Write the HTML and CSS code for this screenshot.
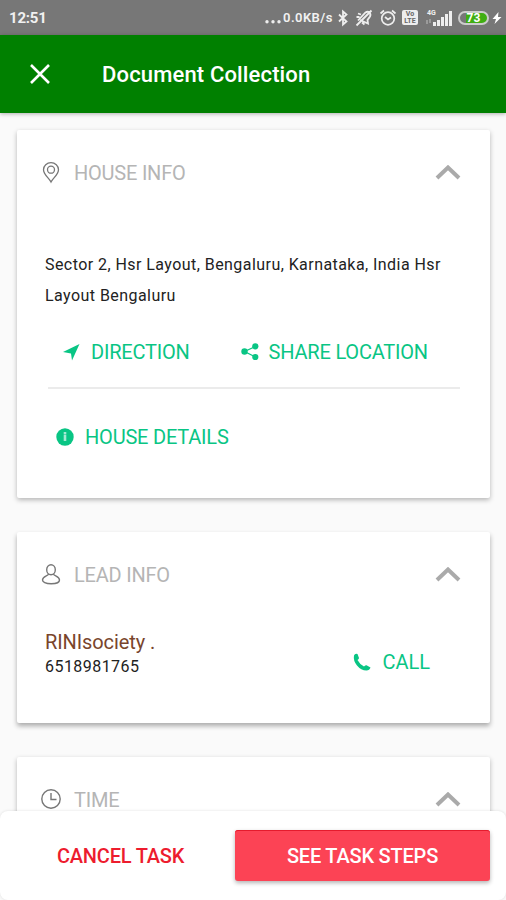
FILE: index.html
```html
<!DOCTYPE html>
<html lang="en">
<head>
  <meta charset="UTF-8">
  <meta name="viewport" content="width=device-width, initial-scale=1.0">
  <title>Document Collection</title>
  <link rel="stylesheet" href="styles.css">
</head>
<body>
  <div class="screen">
    <div class="status-bar">
      <span class="clock">12:51</span>
      <div class="status-icons">
        <svg class="dots" width="18" height="20" viewBox="0 0 18 20" fill="#eee"><circle cx="2" cy="13.800" r="1.700"/><circle cx="8" cy="13.800" r="1.700"/><circle cx="14" cy="13.800" r="1.700"/></svg>
        <span class="speed">0.0KB/s</span>
        <svg class="bluetooth" width="10" height="18" viewBox="0 0 10 18" fill="none" stroke="#eee" stroke-width="1.800"><path d="M1 5.500l7.500 7L5 15.500v-13L8.500 5.500l-7.500 7"/></svg>
        <svg class="muted" width="18" height="18" viewBox="0 0 18 18" fill="none" stroke="#eee" stroke-width="1.800"><path d="M3 11.500l7.500-8c3-2 6 1 4.500 4l-2.500 3.500.5 3.500-8-3.500M7 13.500l2.500 2M1.500 16.500L16.500 1.500M3 4.500l3 1M1.500 8h3"/></svg>
        <svg class="alarm" width="18" height="18" viewBox="0 0 18 18" fill="none" stroke="#eee" stroke-width="1.700"><circle cx="9" cy="9.500" r="6.300"/><path d="M1.500 4.500L5 1.500M16.500 4.500L13 1.500M6 8l3 2.500 3-2"/></svg>
        <div class="volte"><span>Vo</span><span>LTE</span></div>
        <div class="signal">
          <span class="network">4G</span>
          <svg width="28" height="16" viewBox="0 0 28 16" fill="#eee"><path d="M8 12h3v4H8zM12 10h3v6h-3zM16 7h3v9h-3zM20 4h3v12h-3zM24 1h3v15h-3z"/><path d="M1 10h2v4H1zM4 9h2v4H4z" opacity=".3"/></svg>
        </div>
        <div class="battery"><span class="level">73</span></div>
        <svg class="bolt" width="10" height="14" viewBox="0 0 10 14" fill="#fff"><path d="M6.500 1L.5 8h3.500L2.500 13 9.500 6H6z"/></svg>
      </div>
    </div>

    <header class="header">
      <svg width="20" height="20" viewBox="0 0 20 20" fill="none" stroke="#fff" stroke-width="2.600"><path d="M1 1l18 18M19 1L1 19"/></svg>
      <h1>Document Collection</h1>
    </header>

    <main class="content">
      <section class="card house">
        <div class="card-header">
          <svg class="card-icon" width="20" height="22" viewBox="0 0 20 22" fill="none" stroke="#777" stroke-width="1.300"><path d="M10 20C8 16 2.500 12.500 2.500 7.700a7.500 7 0 0 1 15 0C17.500 12.500 12 16 10 20z"/><circle cx="10" cy="7.700" r="3.500"/></svg>
          <h2>HOUSE INFO</h2>
          <svg class="chevron" width="26" height="16" viewBox="0 0 26 16"><path d="M2 13L13 2.500 24 13"/></svg>
        </div>
        <p class="address">Sector 2, Hsr Layout, Bengaluru, Karnataka, India Hsr Layout Bengaluru</p>
        <div class="actions">
          <a class="link direction">
            <svg width="17" height="17" viewBox="0 0 17 17"><path d="M16.500 0L9 16.500 8 9.500 0 8z"/></svg>
            <span>DIRECTION</span>
          </a>
          <a class="link share">
            <svg width="18" height="18" viewBox="0 0 18 18"><path d="M14.500 3.500L3.500 8.500l11 5.500" fill="none" stroke="#09c584" stroke-width="1.300"/><circle cx="3.500" cy="8.500" r="3.200"/><circle cx="14.300" cy="3.300" r="3.100"/><circle cx="14.300" cy="14" r="3.100"/></svg>
            <span>SHARE LOCATION</span>
          </a>
        </div>
        <a class="link details">
          <svg width="18" height="18" viewBox="0 0 18 18"><circle cx="9" cy="9" r="8.700"/><path d="M7.700 4h2.600v2H7.700zM7.700 6.500h2.600v6.500H7.700z" fill="#a6e9d3"/></svg>
          <span>HOUSE DETAILS</span>
        </a>
      </section>

      <section class="card lead">
        <div class="card-header">
          <svg class="card-icon" width="20" height="22" viewBox="0 0 20 22" fill="none" stroke="#777" stroke-width="1.400"><ellipse cx="10" cy="5.700" rx="4.300" ry="5"/><path d="M7.500 10c0 2-6 2-6 6 0 1.800 3 3.800 8.700 3.800s8.300-2 8.300-3.800c0-4-6-4-6-6"/></svg>
          <h2>LEAD INFO</h2>
          <svg class="chevron" width="26" height="16" viewBox="0 0 26 16"><path d="M2 13L13 2.500 24 13"/></svg>
        </div>
        <div class="lead-row">
          <div class="person">
            <div class="name">RINIsociety .</div>
            <div class="phone">6518981765</div>
          </div>
          <a class="link call">
            <svg width="18" height="18" viewBox="0 0 18 18"><path d="M1 2.500Q2 0 4.500 1L6 5Q6 6 4.500 7 6.500 11 11 13.500 12.500 12 13.500 12.200L17.500 14.500Q16.500 17.500 13.500 17.500 8 17.500 4 12.500 0 7.500 1 2.500z"/></svg>
            <span>CALL</span>
          </a>
        </div>
      </section>

      <section class="card time">
        <div class="card-header">
          <svg class="card-icon" width="20" height="22" viewBox="0 0 20 22" fill="none" stroke="#777" stroke-width="1.400"><circle cx="10" cy="10" r="9.200"/><path d="M10 4v6.500h5.500"/></svg>
          <h2>TIME</h2>
          <svg class="chevron" width="26" height="16" viewBox="0 0 26 16"><path d="M2 13L13 2.500 24 13"/></svg>
        </div>
      </section>
    </main>

    <footer class="footer">
      <button class="cancel">CANCEL TASK</button>
      <button class="steps">SEE TASK STEPS</button>
    </footer>
  </div>
</body>
</html>
```

FILE: styles.css
```css
* {
  box-sizing: border-box;
}

body {
  margin: 0;
  font-family: Roboto, sans-serif;
  background-color: #fafafa;
}

h1, h2, p {
  margin: 0;
}

svg {
  display: block;
  flex-shrink: 0;
}

.screen {
  display: flex;
  flex-direction: column;
  height: 900px;
  overflow: hidden;
}

.status-bar {
  display: flex;
  flex-shrink: 0;
  justify-content: space-between;
  align-items: center;
  height: 35px;
  padding: 0 4px 0 9px;
  background-color: #777;
  color: #f1f1f1;
}

.clock {
  font-size: 15px;
  font-weight: 700;
  letter-spacing: -0.2px;
}

.status-icons {
  display: flex;
  align-items: center;
}

.speed {
  width: 52px;
  margin-right: 3px;
  font-size: 13px;
  font-weight: 600;
  letter-spacing: 0.45px;
  white-space: nowrap;
}

.bluetooth {
  margin-right: 7px;
}

.muted {
  margin-right: 6px;
}

.alarm {
  margin-right: 5px;
}

.volte {
  display: flex;
  flex-direction: column;
  align-items: center;
  width: 16px;
  height: 15px;
  margin-right: 7px;
  padding-top: 1px;
  border-radius: 2px;
  background-color: #eee;
  color: #666;
  font-size: 7px;
  font-weight: 700;
  line-height: 6.500px;
}

.signal {
  position: relative;
  margin-right: 5px;
}

.network {
  position: absolute;
  top: -1px;
  left: 2px;
  font-size: 7px;
  font-weight: 700;
  line-height: 8px;
}

.battery {
  display: flex;
  align-items: center;
  justify-content: center;
  width: 31px;
  height: 14px;
  margin-right: 3px;
  border: 2px solid #ccc;
  border-radius: 7px;
  background: linear-gradient(90deg, #777 24%, #3fae12 24%);
}

.level {
  color: #fff;
  font-size: 12px;
  font-weight: 700;
  line-height: 10px;
}

.header {
  display: flex;
  flex-shrink: 0;
  align-items: center;
  gap: 52px;
  height: 78px;
  padding-left: 30px;
  background-color: #008000;
  color: #fff;
  box-shadow: 0 1px 4px rgba(0, 0, 0, 0.3);
}

.header h1 {
  padding-top: 1px;
  font-size: 22px;
  font-weight: 500;
  line-height: 30px;
  letter-spacing: 0.15px;
}

.content {
  display: flex;
  flex: 1;
  flex-direction: column;
  gap: 34px;
  padding: 17px 16px 0 17px;
  overflow: hidden;
}

.card {
  flex-shrink: 0;
  padding: 29px 29px 0 24px;
  border-radius: 2px;
  background-color: #fff;
  box-shadow: 0 2px 5px rgba(0, 0, 0, 0.28);
}

.house {
  height: 368px;
}

.lead {
  height: 191px;
  box-shadow: 0 3px 5px rgba(0, 0, 0, 0.32);
}

.time {
  height: 160px;
}

.card-header {
  display: flex;
  align-items: center;
  height: 27px;
}

.card-header h2 {
  margin-left: 13px;
  color: #b5b5b5;
  font-size: 20px;
  font-weight: 400;
  letter-spacing: -0.22px;
}

.chevron {
  margin-left: auto;
  fill: none;
  stroke: #aaa;
  stroke-width: 4;
}

.address {
  margin: 63px -4px 0 4px;
  color: #222;
  font-size: 16px;
  line-height: 31px;
  letter-spacing: 0.44px;
}

.actions {
  display: flex;
  gap: 51px;
  height: 78px;
  margin: 0 1px 0 7px;
  padding: 28px 0 0 15px;
  border-bottom: 2px solid #ebebeb;
}

.link {
  display: flex;
  align-items: center;
  height: 26px;
  color: #09c584;
  font-size: 20px;
  letter-spacing: -0.2px;
  white-space: nowrap;
}

.link svg {
  margin-right: 11px;
  fill: #09c584;
}

.share svg {
  margin-right: 10px;
}

.details {
  margin: 35px 0 0 15px;
}

.lead-row {
  display: flex;
  justify-content: space-between;
  margin: 41px 31px 0 4px;
}

.name {
  color: #79452c;
  font-size: 20px;
  line-height: 26px;
  letter-spacing: -0.1px;
}

.phone {
  padding-top: 1px;
  color: #222;
  font-size: 16px;
  line-height: 22px;
  letter-spacing: 0.45px;
}

.call {
  margin-top: 20px;
  letter-spacing: 0;
}

.footer {
  position: relative;
  display: flex;
  flex-shrink: 0;
  align-items: flex-start;
  height: 89px;
  padding: 19px 16px 0 6px;
  border-radius: 8px;
  background-color: #fff;
  box-shadow: 0 0 3px rgba(0, 0, 0, 0.12);
}

.footer button {
  height: 51px;
  padding: 0;
  border: 0;
  font-family: inherit;
  font-size: 20px;
  font-weight: 500;
  letter-spacing: -0.2px;
}

.footer .cancel {
  width: 229px;
  background: none;
  color: #ed1c2e;
}

.footer .steps {
  flex: 1;
  border-radius: 3px;
  background-color: #fc4355;
  color: #fff;
  box-shadow: 0 2px 4px rgba(0, 0, 0, 0.3), inset 0 1px #e51b2d;
}
```
